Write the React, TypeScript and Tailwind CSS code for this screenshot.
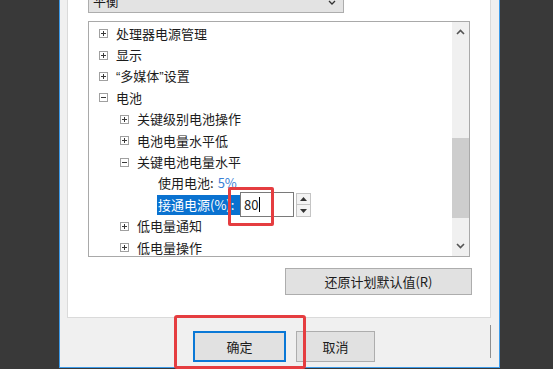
import React from "react";

function Box({ minus }: { minus?: boolean }) {
  return (
    <svg width="9" height="9" viewBox="0 0 9 9" className="shrink-0">
      <rect x="0.5" y="0.5" width="8" height="8" fill="white" stroke="#a0a0a0" />
      <path d="M2 4.5h5" stroke="#3a3a3a" />
      {!minus && <path d="M4.5 2v5" stroke="#3a3a3a" />}
    </svg>
  );
}

function Row({ level, minus, text }: { level: 1 | 2; minus?: boolean; text: React.ReactNode }) {
  return (
    <div className={`flex h-[21.4px] items-center ${level === 1 ? "pl-[10px]" : "pl-[31px]"}`}>
      <Box minus={minus} />
      <span className="ml-[8px] whitespace-nowrap">{text}</span>
    </div>
  );
}

export default function App() {
  return (
    <div className="relative flex h-[369px] w-[553px] overflow-hidden bg-[#393939] font-['Noto_Sans_CJK_SC',sans-serif] text-[13px] text-[#1c1c1c]">
      <div className="w-[59px] shrink-0" />
      <div className="flex h-[368px] w-[441px] shrink-0 flex-col border-x border-b border-[#3d9be9] bg-[#f0f0f0]">
        {/* white tab panel */}
        <div className="ml-[7px] mr-[8px] flex h-[318px] flex-col border-x border-b border-[#dadada] bg-white pl-[20px] pr-[18px]">
          {/* combobox (cut off) */}
          <div className="-mt-[10px] flex h-[23px] w-[256px] items-start justify-between border border-[#adadad] bg-[#e3e3e3] pl-[4px] pr-[7px] pt-[3px] leading-[13px]">
            <span>平衡</span>
            <svg width="8" height="6" viewBox="0 0 8 6" className="mt-[6px]">
              <path d="M1 1l3 3 3-3" fill="none" stroke="#333" strokeWidth="1.3" />
            </svg>
          </div>
          {/* tree list */}
          <div className="mt-[8px] flex h-[236px] w-[382px] border border-[#a9a9a9] bg-white">
            <div className="flex-1 overflow-hidden pt-[1px] leading-[16px]">
              <Row level={1} text="处理器电源管理" />
              <Row level={1} text="显示" />
              <Row
                level={1}
                text={
                  <>
                    <span className="font-['Liberation_Sans',sans-serif]">“</span>多媒体
                    <span className="font-['Liberation_Sans',sans-serif]">”</span>设置
                  </>
                }
              />
              <Row level={1} minus text="电池" />
              <Row level={2} text="关键级别电池操作" />
              <Row level={2} text="电池电量水平低" />
              <Row level={2} minus text="关键电池电量水平" />
              <div className="flex h-[21.4px] items-center pl-[69px]">
                <span className="whitespace-nowrap">使用电池:</span>
                <span className="ml-[4px] text-[#3a7fd5]">5%</span>
              </div>
              <div className="flex h-[21.4px] items-center pl-[68px]">
                <span className="flex h-[20px] w-[83px] items-center whitespace-nowrap bg-[#0a72d0] pl-[1px] text-white">
                  接通电源(%):
                </span>
                <div className="flex h-[25px] w-[54px] items-center border border-[#7a7a7a] bg-white pl-[3px]">
                  <span className="leading-[14px]">80</span>
                  <span className="ml-[1px] h-[15px] w-px bg-black" />
                </div>
                <div className="ml-[2px] flex h-[24px] w-[15px] flex-col border border-[#c4c4c4] bg-[#f3f3f3]">
                  <div className="flex flex-1 items-center justify-center border-b border-[#c4c4c4]">
                    <svg width="7" height="4" viewBox="0 0 7 4"><path d="M0 4L3.5 0 7 4z" fill="#333" /></svg>
                  </div>
                  <div className="flex flex-1 items-center justify-center">
                    <svg width="7" height="4" viewBox="0 0 7 4"><path d="M0 0h7L3.5 4z" fill="#333" /></svg>
                  </div>
                </div>
              </div>
              <Row level={2} text="低电量通知" />
              <Row level={2} text="低电量操作" />
            </div>
            {/* scrollbar */}
            <div className="flex w-[17px] shrink-0 flex-col bg-[#f0f0f0]">
              <div className="flex h-[20px] items-center justify-center">
                <svg width="9" height="6" viewBox="0 0 9 6"><path d="M1 5l3.5-3.5L8 5" fill="none" stroke="#555" strokeWidth="1.6" /></svg>
              </div>
              <div className="mt-[96px] h-[80px] bg-[#cdcdcd]" />
              <div className="flex-1" />
              <div className="flex h-[20px] items-center justify-center">
                <svg width="9" height="6" viewBox="0 0 9 6"><path d="M1 1l3.5 3.5L8 1" fill="none" stroke="#555" strokeWidth="1.6" /></svg>
              </div>
            </div>
          </div>
          {/* restore button */}
          <div className="mt-[11px] ml-auto flex h-[27px] w-[187px] items-center justify-center border border-[#adadad] bg-[#e1e1e1]">
            还原计划默认值(R)
          </div>
        </div>
        {/* bottom buttons */}
        <div className="mt-[13px] flex items-start">
          <div className="ml-[133px] flex h-[31px] w-[93px] items-center justify-center border-2 border-[#0a78d6] bg-[#e1e1e1]">
            确定
          </div>
          <div className="ml-[10px] flex h-[31px] w-[79px] items-center justify-center border border-[#adadad] bg-[#e1e1e1]">
            取消
          </div>
          <div className="ml-[115px] -mt-[6px] h-[33px] w-px bg-[#8f8f8f]" />
        </div>
      </div>
      {/* red highlight boxes */}
      <div className="absolute left-[228px] top-[187px] h-[39px] w-[46px] rounded-[2px] border-[3px] border-[#e53d40]" />
      <div className="absolute left-[174px] top-[315px] h-[54px] w-[132px] rounded-[3px] border-[3px] border-[#e53d40]" />
    </div>
  );
}
